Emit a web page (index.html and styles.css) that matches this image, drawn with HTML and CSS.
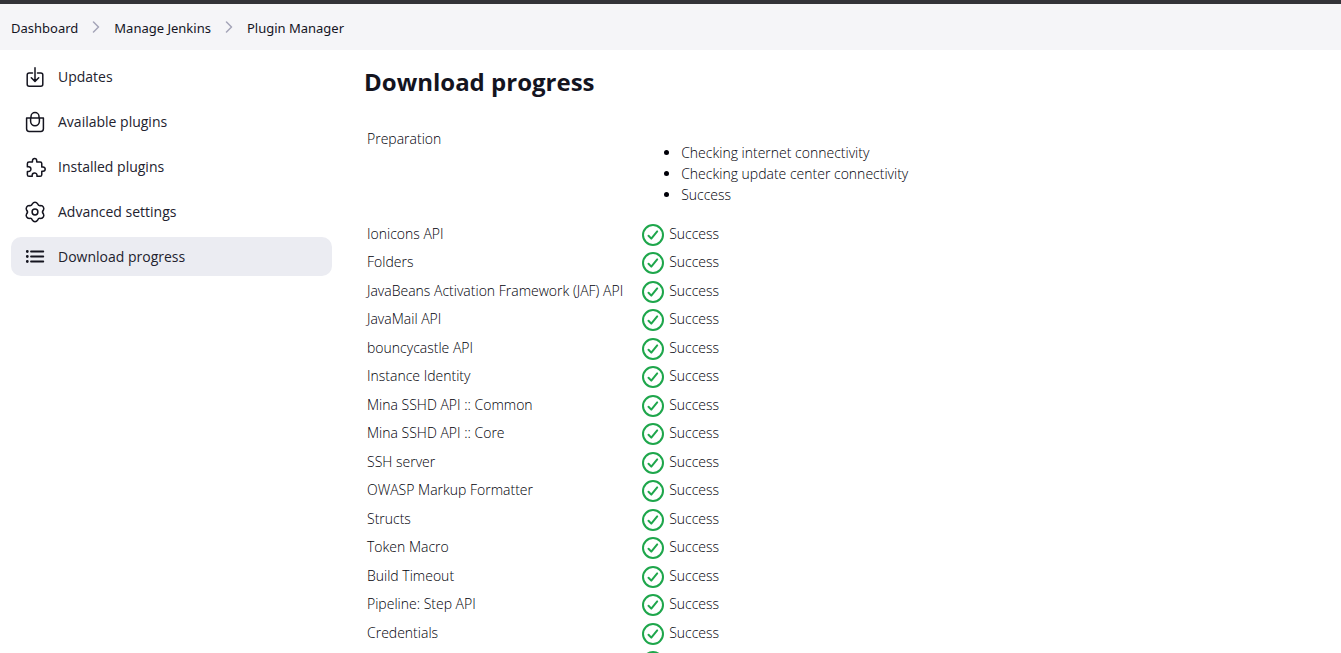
FILE: index.html
```
<!DOCTYPE html>
<html lang="en">
<head>
<meta charset="utf-8">
<title>Plugin Manager - Download progress</title>
<link rel="stylesheet" href="styles.css">
</head>
<body>
<svg class="sprite" aria-hidden="true">
  <symbol id="ok" viewBox="0 0 24 24"><circle cx="12" cy="12" r="10"/><path d="M7.5 12.7l2.8 2.9 5.9-7.2"/></symbol>
  <symbol id="chevron" viewBox="0 0 8 12"><path d="M1.5 1l5 5-5 5"/></symbol>
</svg>
<header class="topbar"></header>
<nav class="breadcrumbs" aria-label="Breadcrumb">
  <a href="#">Dashboard</a>
  <svg class="chevron"><use href="#chevron"/></svg>
  <a href="#">Manage Jenkins</a>
  <svg class="chevron"><use href="#chevron"/></svg>
  <a href="#">Plugin Manager</a>
</nav>
<div class="page">
  <nav class="tasks" aria-label="Plugin Manager">
    <a class="task" href="#"><svg class="icon" viewBox="0 0 24 24"><path d="M9.5 8H6.2a2 2 0 0 0-2 2v9.2a2 2 0 0 0 2 2h11.6a2 2 0 0 0 2-2V10a2 2 0 0 0-2-2h-3.3M12 2.8v13.4M8.3 12.7l3.7 3.7 3.7-3.7"/></svg>Updates</a>
    <a class="task" href="#"><svg class="icon" viewBox="0 0 24 24"><path d="M3.6 8h16.8v10.8a2.6 2.6 0 0 1-2.6 2.6H6.2a2.6 2.6 0 0 1-2.6-2.6zM8 8V6.6a4 4 0 0 1 8 0V8M7.6 8v3.3a4.4 4.4 0 0 0 8.8 0V8"/></svg>Available plugins</a>
    <a class="task" href="#"><svg class="icon" viewBox="-34 -34 560 560"><path class="heavy" d="M433.66 246.1H406a2 2 0 0 1-2-2v-77.24A38.86 38.86 0 0 0 365.14 128H287.9a2 2 0 0 1-2-2V98.34c0-27.14-21.5-49.86-48.64-50.33a49.53 49.53 0 0 0-50.4 49.51V126a2 2 0 0 1-2 2h-77.24A39.74 39.74 0 0 0 68 167.62V238a2 2 0 0 0 2 2h26.91c29.37 0 53.68 25.48 54.09 54.85.42 29.87-23.51 57.15-53.29 57.15H70a2 2 0 0 0-2 2v70.38A39.74 39.74 0 0 0 107.62 464H178a2 2 0 0 0 2-2v-20.93c0-30.28 24.75-56.35 55-57.06 30.1-.7 57 20.31 57 50.28V462a2 2 0 0 0 2 2h71.14A38.86 38.86 0 0 0 404 425.14v-78a2 2 0 0 1 2-2h28.48c27.63 0 49.52-22.67 49.52-50.4s-23.2-48.64-50.34-48.64z"/></svg>Installed plugins</a>
    <a class="task" href="#"><svg class="icon" viewBox="0 0 24 24"><circle cx="12" cy="12" r="2.9"/><path d="M9.4 3.8A3 3 0 0 1 14.6 3.8A2.7 2.7 0 0 0 17.8 5.6A3 3 0 0 1 20.4 10.1A2.7 2.7 0 0 0 20.4 13.9A3 3 0 0 1 17.8 18.4A2.7 2.7 0 0 0 14.6 20.2A3 3 0 0 1 9.4 20.2A2.7 2.7 0 0 0 6.2 18.4A3 3 0 0 1 3.6 13.9A2.7 2.7 0 0 0 3.6 10.1A3 3 0 0 1 6.2 5.6A2.7 2.7 0 0 0 9.4 3.8z"/></svg>Advanced settings</a>
    <a class="task active" href="#" aria-current="page"><svg class="icon" viewBox="0 0 24 24"><path class="lines" d="M8 6.5h12.3M8 11.5h12.3M8 16.5h12.3"/><path class="dots" d="M4.3 6.5h.01M4.3 11.5h.01M4.3 16.5h.01"/></svg>Download progress</a>
  </nav>
  <main class="content">
    <h1>Download progress</h1>
    <table class="progress">
      <tbody>
        <tr class="prep"><td>Preparation</td><td><ul><li>Checking internet connectivity</li><li>Checking update center connectivity</li><li>Success</li></ul></td></tr>
        <tr><td>Ionicons API</td><td><svg class="ok"><use href="#ok"/></svg>Success</td></tr>
        <tr><td>Folders</td><td><svg class="ok"><use href="#ok"/></svg>Success</td></tr>
        <tr><td>JavaBeans Activation Framework (JAF) API</td><td><svg class="ok"><use href="#ok"/></svg>Success</td></tr>
        <tr><td>JavaMail API</td><td><svg class="ok"><use href="#ok"/></svg>Success</td></tr>
        <tr><td>bouncycastle API</td><td><svg class="ok"><use href="#ok"/></svg>Success</td></tr>
        <tr><td>Instance Identity</td><td><svg class="ok"><use href="#ok"/></svg>Success</td></tr>
        <tr><td>Mina SSHD API :: Common</td><td><svg class="ok"><use href="#ok"/></svg>Success</td></tr>
        <tr><td>Mina SSHD API :: Core</td><td><svg class="ok"><use href="#ok"/></svg>Success</td></tr>
        <tr><td>SSH server</td><td><svg class="ok"><use href="#ok"/></svg>Success</td></tr>
        <tr><td>OWASP Markup Formatter</td><td><svg class="ok"><use href="#ok"/></svg>Success</td></tr>
        <tr><td>Structs</td><td><svg class="ok"><use href="#ok"/></svg>Success</td></tr>
        <tr><td>Token Macro</td><td><svg class="ok"><use href="#ok"/></svg>Success</td></tr>
        <tr><td>Build Timeout</td><td><svg class="ok"><use href="#ok"/></svg>Success</td></tr>
        <tr><td>Pipeline: Step API</td><td><svg class="ok"><use href="#ok"/></svg>Success</td></tr>
        <tr><td>Credentials</td><td><svg class="ok"><use href="#ok"/></svg>Success</td></tr>
        <tr><td></td><td><svg class="ok"><use href="#ok"/></svg></td></tr>
      </tbody>
    </table>
  </main>
</div>
</body>
</html>
```
FILE: styles.css
```
* { box-sizing: border-box; }
html { height: 100%; overflow: hidden; }
body {
  margin: 0;
  height: 100%;
  overflow: hidden;
  background: #fff;
  color: #14141f;
  font: 300 14px/21px "Open Sans", "Noto Sans", sans-serif;
}
a { color: inherit; text-decoration: none; }
svg { fill: none; stroke: currentColor; stroke-linecap: round; stroke-linejoin: round; flex: none; }
.sprite { display: none; }
.topbar { height: 4px; background: #333338; }
.breadcrumbs {
  display: flex;
  align-items: center;
  gap: 14px;
  height: 46px;
  padding: 2px 11px 0;
  background: #f5f5f8;
  font-family: "Noto Sans", "Open Sans", sans-serif;
  font-size: 13px;
  font-weight: 400;
}
.chevron { width: 8px; height: 12px; color: #a5a5b8; stroke-width: 1.5; margin-bottom: 2px; }
.page { display: grid; grid-template-columns: 321px 1fr; column-gap: 32px; padding: 7px 11px 0; }
.tasks { display: flex; flex-direction: column; gap: 6px; }
.task {
  display: flex;
  align-items: center;
  gap: 11px;
  height: 39px;
  padding: 0 12px;
  border-radius: 10px;
  font-size: 14px;
  font-weight: 500;
  color: #22222e;
}
.icon { width: 24px; height: 24px; stroke-width: 1.5; color: #14141f; }
.heavy { stroke-width: 35; }
.lines { stroke-width: 1.8; }
.dots { stroke-width: 2.8; }
.active { background: #ebecf2; }
h1 { margin: 7px 0 0; font-size: 24px; line-height: 36px; font-weight: 700; }
.progress { margin-top: 28px; border-collapse: collapse; color: #000008; }
.progress td { padding: 0 18px 0 3px; height: 28px; white-space: nowrap; vertical-align: top; line-height: 26px; }
.progress td + td { padding: 0; }
.progress tr:nth-child(odd) td { height: 29px; }
.progress .prep td { height: 93px; line-height: 21px; }
.progress ul { margin: 14px 0 16px; padding-left: 40px; }
.ok { width: 24px; height: 24px; margin: 2px 4px 0 0; vertical-align: top; color: #1ea64b; stroke-width: 2; }
```
